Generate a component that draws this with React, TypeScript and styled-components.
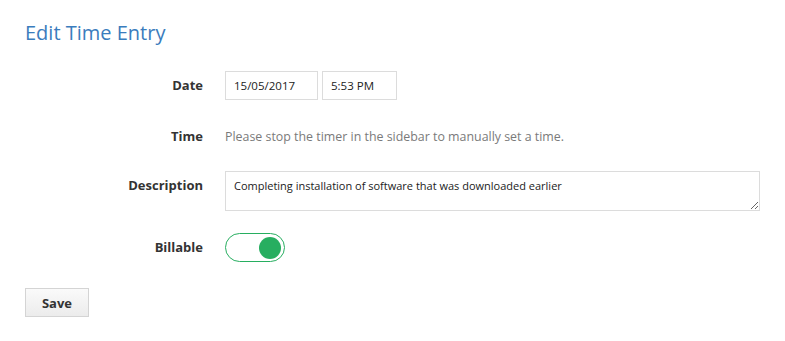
import React, { useState } from 'react';
import styled, { createGlobalStyle } from 'styled-components';

const GlobalStyle = createGlobalStyle`
    html, body {
        margin: 0;
        padding: 0;
        background: #fff;
    }
    body {
        font-family: 'Open Sans', 'Noto Sans', sans-serif;
        color: #333;
    }
`;

const Page = styled.div`
    padding: 19px 25px;
`;

const Title = styled.h2`
    margin: 0 0 24px 0;
    font-size: 20px;
    font-weight: 400;
    line-height: 28px;
    color: #3a7cbd;
`;

const Row = styled.div<{ mb: number }>`
    display: grid;
    grid-template-columns: 178px 1fr;
    column-gap: 22px;
    align-items: start;
    margin-bottom: ${(p) => p.mb}px;
`;

const Label = styled.label`
    text-align: right;
    font-size: 13px;
    font-weight: 700;
    color: #333;
    line-height: 29px;
`;

const Inputs = styled.div`
    display: flex;
    gap: 4px;
`;

const TextInput = styled.input<{ w: number }>`
    box-sizing: border-box;
    width: ${(p) => p.w}px;
    height: 29px;
    border: 1px solid #dcdcdc;
    padding: 0 8px;
    font-family: inherit;
    font-size: 11.5px;
    color: #222;
    outline: none;
`;

const Hint = styled.div`
    font-size: 12.4px;
    line-height: 29px;
    color: #7a7a7a;
`;

const TextArea = styled.textarea`
    box-sizing: border-box;
    width: 535px;
    height: 40px;
    border: 1px solid #dcdcdc;
    padding: 6px 8px;
    font-family: inherit;
    font-size: 11px;
    line-height: 15px;
    color: #222;
    resize: vertical;
    outline: none;
    display: block;
`;

const Toggle = styled.button`
    position: relative;
    box-sizing: border-box;
    width: 60px;
    height: 29px;
    border-radius: 15px;
    border: 1px solid #27ae60;
    background: #fff;
    padding: 0;
    cursor: pointer;
    display: block;
`;

const Knob = styled.span<{ on: boolean }>`
    position: absolute;
    top: 2.5px;
    left: ${(p) => (p.on ? '33px' : '3px')};
    width: 22px;
    height: 22px;
    border-radius: 50%;
    background: #27ae60;
`;

const SaveButton = styled.button`
    box-sizing: border-box;
    width: 64px;
    height: 29px;
    border: 1px solid #d4d4d4;
    background: linear-gradient(#fafafa, #ececec);
    font-family: inherit;
    font-size: 13px;
    font-weight: 700;
    color: #333;
    cursor: pointer;
`;

export default function App() {
    const [billable, setBillable] = useState(true);
    return (
        <>
            <GlobalStyle />
            <Page>
                <Title>Edit Time Entry</Title>
                <Row mb={22}>
                    <Label>Date</Label>
                    <Inputs>
                        <TextInput w={93} defaultValue="15/05/2017" />
                        <TextInput w={75} defaultValue="5:53 PM" />
                    </Inputs>
                </Row>
                <Row mb={20}>
                    <Label>Time</Label>
                    <Hint>Please stop the timer in the sidebar to manually set a time.</Hint>
                </Row>
                <Row mb={22}>
                    <Label>Description</Label>
                    <TextArea defaultValue="Completing installation of software that was downloaded earlier" />
                </Row>
                <Row mb={26}>
                    <Label>Billable</Label>
                    <Toggle onClick={() => setBillable(!billable)}>
                        <Knob on={billable} />
                    </Toggle>
                </Row>
                <SaveButton>Save</SaveButton>
            </Page>
        </>
    );
}
